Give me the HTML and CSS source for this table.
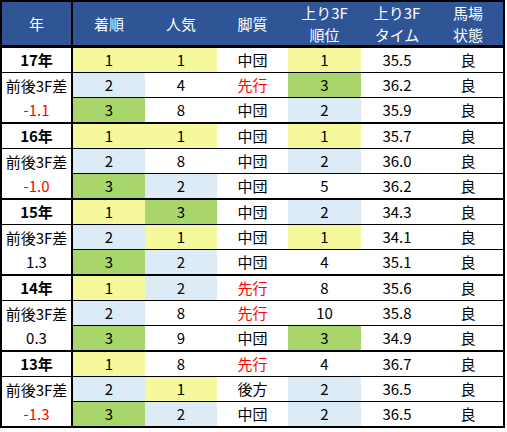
FILE: index.html
```html
<!DOCTYPE html>
<html lang="ja">
<head>
<meta charset="utf-8">
<link rel="stylesheet" href="styles.css">
</head>
<body>
<div class="tbl">
  <div class="row hd">
    <div class="c yc">年</div>
    <div class="c">着順</div>
    <div class="c">人気</div>
    <div class="c">脚質</div>
    <div class="c two">上り3F<br>順位</div>
    <div class="c two">上り3F<br>タイム</div>
    <div class="c two">馬場<br>状態</div>
  </div>

  <div class="row r1">
    <div class="c yc yr">17年</div>
    <div class="c y">1</div><div class="c y">1</div><div class="c">中団</div><div class="c y">1</div><div class="c">35.5</div><div class="c">良</div>
  </div>
  <div class="row r2">
    <div class="c yc diff"><span class="lbl">前後3F差</span><span class="val red">-1.1</span></div>
    <div class="c b">2</div><div class="c">4</div><div class="c red">先行</div><div class="c g">3</div><div class="c">36.2</div><div class="c">良</div>
  </div>
  <div class="row r3">
    <div class="c g">3</div><div class="c">8</div><div class="c">中団</div><div class="c b">2</div><div class="c">35.9</div><div class="c">良</div>
  </div>

  <div class="row r1">
    <div class="c yc yr">16年</div>
    <div class="c y">1</div><div class="c y">1</div><div class="c">中団</div><div class="c y">1</div><div class="c">35.7</div><div class="c">良</div>
  </div>
  <div class="row r2">
    <div class="c yc diff"><span class="lbl">前後3F差</span><span class="val red">-1.0</span></div>
    <div class="c b">2</div><div class="c">8</div><div class="c">中団</div><div class="c b">2</div><div class="c">36.0</div><div class="c">良</div>
  </div>
  <div class="row r3">
    <div class="c g">3</div><div class="c b">2</div><div class="c">中団</div><div class="c">5</div><div class="c">36.2</div><div class="c">良</div>
  </div>

  <div class="row r1">
    <div class="c yc yr">15年</div>
    <div class="c y">1</div><div class="c g">3</div><div class="c">中団</div><div class="c b">2</div><div class="c">34.3</div><div class="c">良</div>
  </div>
  <div class="row r2">
    <div class="c yc diff"><span class="lbl">前後3F差</span><span class="val">1.3</span></div>
    <div class="c b">2</div><div class="c y">1</div><div class="c">中団</div><div class="c y">1</div><div class="c">34.1</div><div class="c">良</div>
  </div>
  <div class="row r3">
    <div class="c g">3</div><div class="c b">2</div><div class="c">中団</div><div class="c">4</div><div class="c">35.1</div><div class="c">良</div>
  </div>

  <div class="row r1">
    <div class="c yc yr">14年</div>
    <div class="c y">1</div><div class="c b">2</div><div class="c red">先行</div><div class="c">8</div><div class="c">35.6</div><div class="c">良</div>
  </div>
  <div class="row r2">
    <div class="c yc diff"><span class="lbl">前後3F差</span><span class="val">0.3</span></div>
    <div class="c b">2</div><div class="c">8</div><div class="c red">先行</div><div class="c">10</div><div class="c">35.8</div><div class="c">良</div>
  </div>
  <div class="row r3">
    <div class="c g">3</div><div class="c">9</div><div class="c">中団</div><div class="c g">3</div><div class="c">34.9</div><div class="c">良</div>
  </div>

  <div class="row r1">
    <div class="c yc yr">13年</div>
    <div class="c y">1</div><div class="c">8</div><div class="c red">先行</div><div class="c">4</div><div class="c">36.7</div><div class="c">良</div>
  </div>
  <div class="row r2 lastgrp">
    <div class="c yc diff"><span class="lbl">前後3F差</span><span class="val red">-1.3</span></div>
    <div class="c b">2</div><div class="c y">1</div><div class="c">後方</div><div class="c b">2</div><div class="c">36.5</div><div class="c">良</div>
  </div>
  <div class="row r3 last">
    <div class="c g">3</div><div class="c b">2</div><div class="c">中団</div><div class="c b">2</div><div class="c">36.5</div><div class="c">良</div>
  </div>
</div>
</body>
</html>
```

FILE: styles.css
```css
html, body {
  margin: 0;
  padding: 0;
  background: #fff;
}

.tbl {
  box-sizing: border-box;
  width: 505px;
  border: 2px solid #000;
  display: grid;
  grid-template-columns: 71px 72px 72px 71px 73px 72px 70px;
  grid-template-rows: 46px repeat(4, 25px 25px 26px) 25px 25px 24px;
  font-family: "Noto Sans CJK JP", "Noto Sans", sans-serif;
  font-size: 15px;
  color: #000;
}

.row {
  display: contents;
}

.c {
  box-sizing: border-box;
  display: flex;
  align-items: center;
  justify-content: center;
  text-align: center;
  white-space: nowrap;
  line-height: 24px;
  border-bottom: 1px solid #000;
}

.yc {
  border-right: 2px solid #000;
}

.hd > .c {
  background: #2F5597;
  color: #fff;
  line-height: 22px;
  border-bottom: 3px solid #000;
}

.r3 > .c {
  border-bottom: 2px solid #000;
}

.diff {
  grid-row: span 2;
  flex-direction: column;
  justify-content: flex-start;
  border-bottom: 2px solid #000;
}

.last > .c,
.lastgrp > .diff {
  border-bottom: none;
}

.yr {
  font-weight: bold;
}

.diff .lbl {
  height: 25px;
  line-height: 25px;
}

.diff .val {
  height: 24px;
  line-height: 24px;
}

.y { background: #F5F99B; }
.g { background: #A9D66A; }
.b { background: #DDEBF7; }
.red { color: #FF0000; }
```
